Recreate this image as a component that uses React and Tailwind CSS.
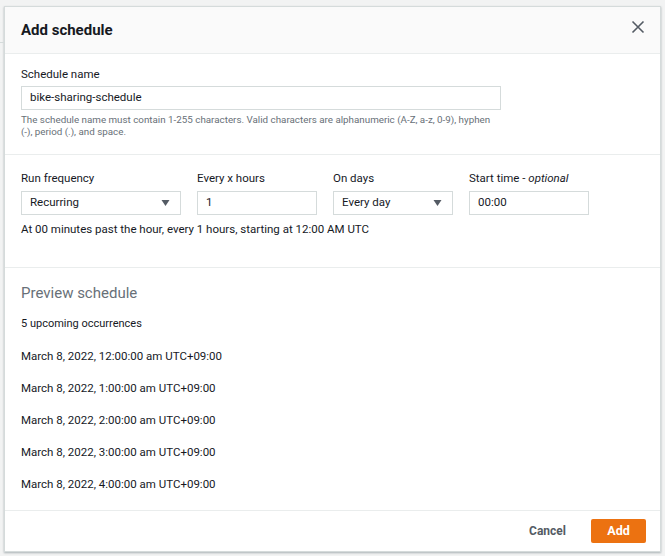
import React from 'react';

const occurrences = [
  'March 8, 2022, 12:00:00 am UTC+09:00',
  'March 8, 2022, 1:00:00 am UTC+09:00',
  'March 8, 2022, 2:00:00 am UTC+09:00',
  'March 8, 2022, 3:00:00 am UTC+09:00',
  'March 8, 2022, 4:00:00 am UTC+09:00',
];

const Caret = () => (
  <svg width="9" height="8" viewBox="0 0 9 8">
    <path d="M0.5 1h8L4.5 7z" fill="#545b64" />
  </svg>
);

const Field = ({ label, width, children }) => (
  <div className={`flex shrink-0 flex-col ${width}`}>
    <div className="mb-[5px] text-[11.5px] leading-[16px] text-[#16191f]">{label}</div>
    {children}
  </div>
);

const App = () => {
  return (
    <div
      className="relative h-[556px] w-[665px] overflow-hidden bg-[#f2f3f3] pl-[4px] pt-[6px]"
      style={{ fontFamily: 'Roboto, "Open Sans", sans-serif' }}
    >
      <div className="absolute left-0 top-[42px] h-px w-[4px] bg-[#d5dbdb]" />
      <div className="flex h-[546px] w-[657px] flex-col border border-[#d5dbdb] bg-white shadow-[0_1px_2px_rgba(0,28,36,0.3)]">
        <div className="flex h-[47px] shrink-0 items-center justify-between border-b border-[#eaeded] bg-[#fafafa] pl-[16px] pr-[15px]">
          <h2 className="text-[15px] font-bold text-[#16191f]">Add schedule</h2>
          <svg width="14" height="14" viewBox="0 0 14 14" className="mb-[6px]">
            <path d="M1.5 1.5l11 11M12.5 1.5l-11 11" stroke="#545b64" strokeWidth="1.6" fill="none" />
          </svg>
        </div>

        <div className="shrink-0 border-b border-[#eaeded] px-[16px] pb-[16px] pt-[12px]">
          <div className="mb-[4px] text-[11.5px] leading-[16px] text-[#16191f]">Schedule name</div>
          <div className="flex h-[24px] w-[480px] items-center border border-[#d5dbdb] px-[8px] text-[11.5px] text-[#16191f]">
            bike-sharing-schedule
          </div>
          <p className="mt-[4px] text-[9.8px] leading-[12px] text-[#687078]">
            The schedule name must contain 1-255 characters. Valid characters are alphanumeric (A-Z, a-z, 0-9), hyphen
            <br />
            (-), period (.), and space.
          </p>
        </div>

        <div className="h-[113px] shrink-0 border-b border-[#eaeded] px-[16px] pt-[15px]">
          <div className="flex gap-[16px]">
            <Field label="Run frequency" width="w-[160px]">
              <div className="flex h-[24px] items-center justify-between border border-[#d5dbdb] pl-[8px] pr-[10px] text-[11.5px] text-[#16191f]">
                Recurring
                <Caret />
              </div>
            </Field>
            <Field label="Every x hours" width="w-[120px]">
              <div className="flex h-[24px] items-center border border-[#d5dbdb] px-[8px] text-[11.5px] text-[#16191f]">1</div>
            </Field>
            <Field label="On days" width="w-[120px]">
              <div className="flex h-[24px] items-center justify-between border border-[#d5dbdb] pl-[8px] pr-[10px] text-[11.5px] text-[#16191f]">
                Every day
                <Caret />
              </div>
            </Field>
            <Field
              width="w-[120px]"
              label={
                <span>
                  Start time - <i>optional</i>
                </span>
              }
            >
              <div className="flex h-[24px] items-center border border-[#d5dbdb] px-[8px] text-[11.5px] text-[#16191f]">00:00</div>
            </Field>
          </div>
          <div className="mt-[6px] text-[11.5px] leading-[16px] text-[#16191f]">
            At 00 minutes past the hour, every 1 hours, starting at 12:00 AM UTC
          </div>
        </div>

        <div className="flex-1 border-b border-[#eaeded] px-[16px] pt-[15px]">
          <h3 className="text-[15px] leading-[20px] text-[#687078]">Preview schedule</h3>
          <div className="mt-[14px] text-[11px] leading-[14px] text-[#16191f]">5 upcoming occurrences</div>
          <div className="mt-[18px] flex flex-col gap-[18px]">
            {occurrences.map((o) => (
              <div key={o} className="text-[11.5px] leading-[14px] text-[#16191f]">
                {o}
              </div>
            ))}
          </div>
        </div>

        <div className="flex h-[40px] shrink-0 items-center justify-end gap-[25px] pr-[14px]">
          <button className="text-[12px] font-bold text-[#545b64]">Cancel</button>
          <button className="h-[24px] w-[55px] rounded-[2px] bg-[#ec7211] text-[12.5px] font-bold text-white">Add</button>
        </div>
      </div>
    </div>
  );
};

export default App;
